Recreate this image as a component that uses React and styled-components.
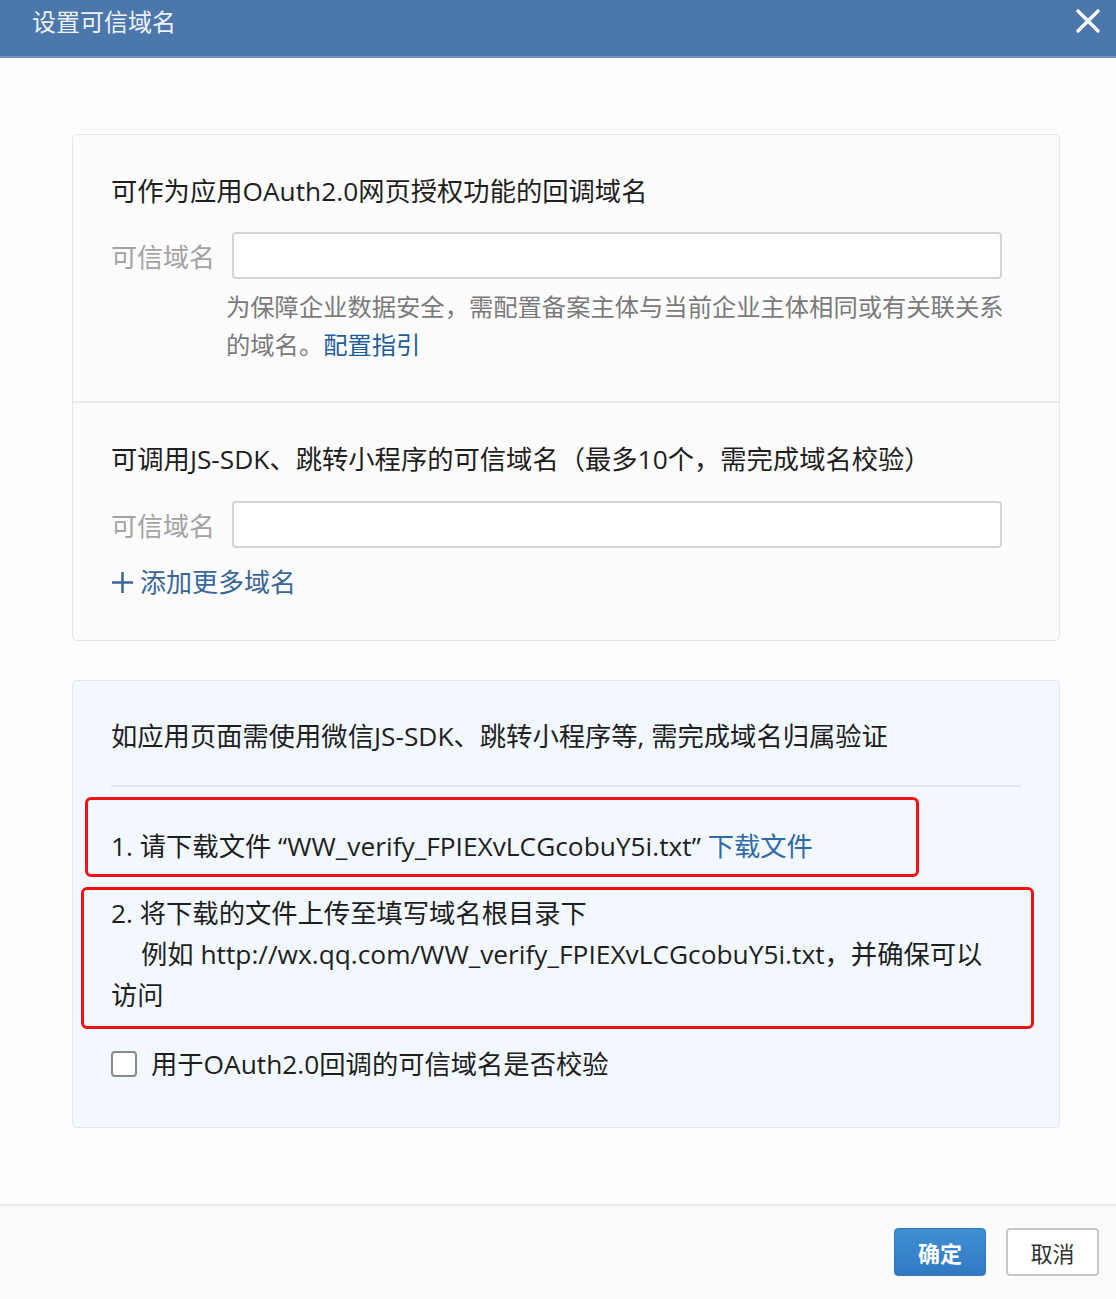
import React from 'react';
import styled, {createGlobalStyle} from "styled-components";

const GlobalStyle = createGlobalStyle`
    html, body {
        margin: 0;
        padding: 0;
        background: #fdfdfd;
    }
    body {
        font-family: "Open Sans", "Noto Sans CJK SC", sans-serif;
        color: #222;
    }
`;

const Dialog = styled.div`
    width: 1116px;
    height: 1299px;
    display: flex;
    flex-direction: column;
    background: #fdfdfd;
    overflow: hidden;
`;

const Header = styled.div`
    height: 56px;
    flex-shrink: 0;
    display: flex;
    align-items: center;
    justify-content: space-between;
    padding: 0 13px 0 32px;
    background: #4b77aa;
    border-bottom: 2px solid #6f93bd;
`;

const HeaderTitle = styled.div`
    font-family: "Noto Sans CJK SC", sans-serif;
    font-size: 24px;
    line-height: 30px;
    color: #eef2f7;
    margin-top: -14px;
`;

const CloseButton = styled.button`
    width: 30px;
    height: 30px;
    padding: 0;
    border: 0;
    background: transparent;
    margin-top: -14px;
    display: flex;
    align-items: center;
    justify-content: center;
`;

const Body = styled.div`
    flex: 1;
    padding: 76px 56px 0 72px;
    display: flex;
    flex-direction: column;
    gap: 39px;
`;

const Card = styled.div`
    border: 1px solid ${({tone}) => tone === 'blue' ? '#e1e7ee' : '#e6e6e6'};
    border-radius: 5px;
    background: ${({tone}) => tone === 'blue' ? '#f2f8fe' : '#fcfcfc'};
`;

const Section = styled.div`
    padding: ${({top}) => top}px 57px ${({bottom}) => bottom}px 38px;
    & + & {
        border-top: 2px solid #ececec;
    }
`;

const Title = styled.div`
    font-size: 26.3px;
    line-height: 36px;
    color: #1e1e1e;
    white-space: nowrap;
`;

const FieldRow = styled.div`
    display: flex;
    align-items: center;
    margin-top: ${({gap}) => gap}px;
`;

const Label = styled.div`
    width: 121px;
    flex-shrink: 0;
    font-size: 26px;
    color: #a3a3a3;
`;

const Input = styled.input`
    flex: 1;
    height: 47px;
    box-sizing: border-box;
    border: 2px solid #d4d4d4;
    border-radius: 4px;
    background: #fff;
    outline: none;
`;

const Hint = styled.div`
    margin: 9px 0 0 115px;
    font-size: 24.3px;
    line-height: 38px;
    color: #7a7a7a;
    white-space: nowrap;
`;

const Link = styled.a`
    color: ${({strong}) => strong ? '#1f5d9c' : '#2f6aa6'};
    text-decoration: none;
`;

const AddMore = styled.div`
    margin-top: 16px;
    display: flex;
    align-items: center;
    gap: 6px;
    font-size: 26px;
    line-height: 36px;
    color: #3a679a;
`;

const VerifyBody = styled.div`
    padding: 37px 38px 43px 38px;
`;

const Divider = styled.div`
    height: 2px;
    background: #e3e8ee;
    margin: 31px 0 10px;
`;

const MarkBox = styled.div`
    border: 3px solid #f21212;
    border-radius: 6px;
    box-sizing: border-box;
    width: ${({w}) => w}px;
    margin-left: ${({shift}) => shift}px;
    margin-top: ${({gap}) => gap || 0}px;
    padding: ${({pad}) => pad};
    font-size: 26.3px;
    color: #1e1e1e;
`;

const StepLine = styled.div`
    line-height: ${({lh}) => lh}px;
    padding-left: ${({indent}) => indent || 0}px;
    white-space: nowrap;
`;

const CheckRow = styled.label`
    display: flex;
    align-items: center;
    gap: 14px;
    margin-top: 15px;
    font-size: 26.3px;
    line-height: 40px;
    color: #1e1e1e;
`;

const CheckBox = styled.span`
    width: 22px;
    height: 22px;
    border: 2px solid #8a8a8a;
    border-radius: 4px;
    background: #fff;
`;

const Footer = styled.div`
    height: 95px;
    flex-shrink: 0;
    border-top: 2px solid #ebebeb;
    background: #fbfbfb;
    display: flex;
    justify-content: flex-end;
    align-items: flex-start;
    gap: 20px;
    padding: 22px 17px 0 0;
    box-sizing: border-box;
`;

const Button = styled.button`
    width: ${({primary}) => primary ? 92 : 93}px;
    height: 48px;
    border-radius: 4px;
    font-family: "Noto Sans CJK SC", sans-serif;
    font-size: 22px;
    border: ${({primary}) => primary ? '1px solid #2f78c0' : '2px solid #c8c8c8'};
    background: ${({primary}) => primary ? 'linear-gradient(#4090d6, #3079c2)' : '#fff'};
    color: ${({primary}) => primary ? '#fff' : '#333'};
    font-weight: ${({primary}) => primary ? 600 : 400};
`;

const App = () => {
    return <>
        <GlobalStyle />
        <Dialog>
            <Header>
                <HeaderTitle>设置可信域名</HeaderTitle>
                <CloseButton>
                    <svg width="26" height="26" viewBox="0 0 26 26">
                        <path d="M3 3 L23 23 M23 3 L3 23" stroke="#fff" strokeWidth="3.4" strokeLinecap="round" />
                    </svg>
                </CloseButton>
            </Header>
            <Body>
                <Card>
                    <Section top={38} bottom={37}>
                        <Title>可作为应用OAuth2.0网页授权功能的回调域名</Title>
                        <FieldRow gap={23}>
                            <Label>可信域名</Label>
                            <Input />
                        </FieldRow>
                        <Hint>
                            为保障企业数据安全，需配置备案主体与当前企业主体相同或有关联关系<br />
                            的域名。<Link strong href="#">配置指引</Link>
                        </Hint>
                    </Section>
                    <Section top={38} bottom={40}>
                        <Title>可调用JS-SDK、跳转小程序的可信域名（最多10个，需完成域名校验）</Title>
                        <FieldRow gap={24}>
                            <Label>可信域名</Label>
                            <Input />
                        </FieldRow>
                        <AddMore>
                            <svg width="23" height="23" viewBox="0 0 24 24">
                                <path d="M12 1 V23 M1 12 H23" stroke="#3a679a" strokeWidth="2.6" />
                            </svg>
                            添加更多域名
                        </AddMore>
                    </Section>
                </Card>
                <Card tone="blue">
                    <VerifyBody>
                        <Title>如应用页面需使用微信JS-SDK、跳转小程序等, 需完成域名归属验证</Title>
                        <Divider />
                        <MarkBox w={834} shift={-26} pad="28px 20px 10px 23px">
                            <StepLine lh={36}>
                                1. 请下载文件 “WW_verify_FPIEXvLCGcobuY5i.txt” <Link href="#">下载文件</Link>
                            </StepLine>
                        </MarkBox>
                        <MarkBox w={953} shift={-30} gap={10} pad="3px 20px 10px 27px">
                            <StepLine lh={41}>2. 将下载的文件上传至填写域名根目录下</StepLine>
                            <StepLine lh={41} indent={30}>例如 http://wx.qq.com/WW_verify_FPIEXvLCGcobuY5i.txt，并确保可以</StepLine>
                            <StepLine lh={41}>访问</StepLine>
                        </MarkBox>
                        <CheckRow>
                            <CheckBox />
                            用于OAuth2.0回调的可信域名是否校验
                        </CheckRow>
                    </VerifyBody>
                </Card>
            </Body>
            <Footer>
                <Button primary>确定</Button>
                <Button>取消</Button>
            </Footer>
        </Dialog>
    </>;
}

export default App;
